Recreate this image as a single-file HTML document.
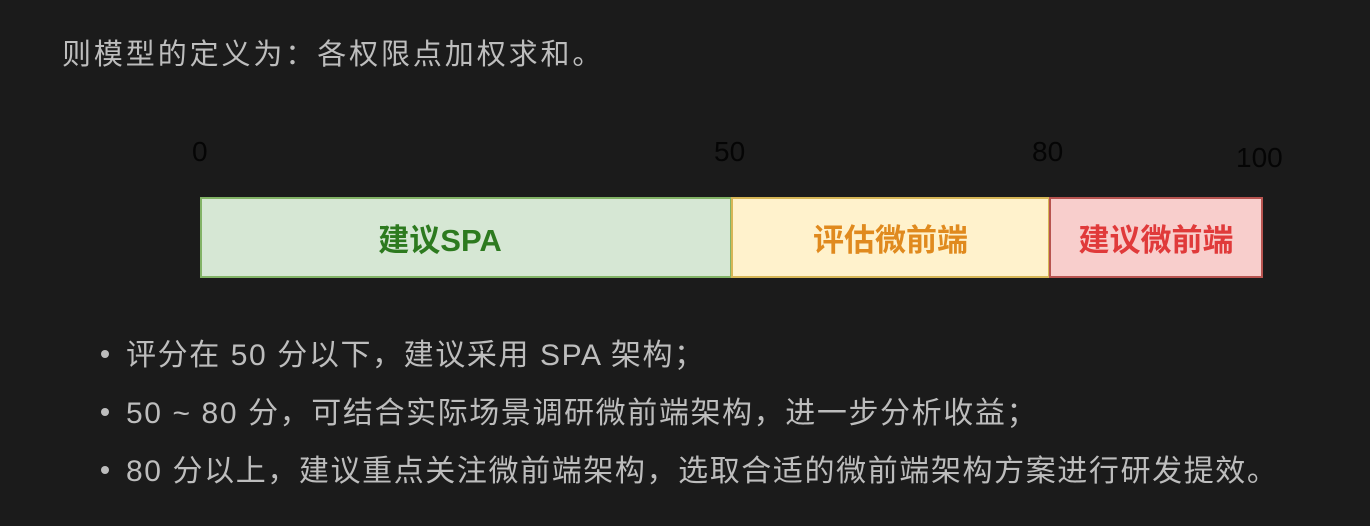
<!DOCTYPE html><html><head><meta charset="utf-8"><style>
body{margin:0;width:1370px;height:526px;background:#1b1b1b;overflow:hidden;position:relative;font-family:"Liberation Sans","Noto Sans CJK SC",sans-serif;color:#bdbdbd}
.t{position:absolute;white-space:nowrap}
.n{position:absolute;color:#050505;font-size:28px;font-family:"Liberation Sans",sans-serif}
.seg{position:absolute;top:197px;height:81px;box-sizing:border-box;display:flex;align-items:center;justify-content:center;font-weight:bold;font-size:31px}
.b{position:absolute;left:126px;font-size:30px;letter-spacing:1.6px;white-space:nowrap}
.d{position:absolute;left:101px;width:8px;height:8px;border-radius:50%;background:#bdbdbd}
</style></head><body>
<div class="t" style="left:62px;top:31px;font-size:29px;letter-spacing:2.9px">则模型的定义为：各权限点加权求和。</div>
<div class="n" style="left:192px;top:136px">0</div>
<div class="n" style="left:714px;top:136px">50</div>
<div class="n" style="left:1032px;top:136px">80</div>
<div class="n" style="left:1236px;top:142px">100</div>
<div class="seg" style="left:200px;width:532px;padding-right:52px;background:#d6e7d4;border:2px solid #82b366;color:#2d7a1f">建议SPA</div>
<div class="seg" style="left:731px;width:319px;background:#fff2cc;border:2px solid #d6b656;color:#e08a1e">评估微前端</div>
<div class="seg" style="left:1049px;width:214px;background:#f8cecc;border:2px solid #b85450;color:#e03a3a">建议微前端</div>
<div class="d" style="top:350px"></div><div class="b" style="top:330px">评分在 50 分以下，建议采用 SPA 架构；</div>
<div class="d" style="top:408px"></div><div class="b" style="top:388px">50 ~ 80 分，可结合实际场景调研微前端架构，进一步分析收益；</div>
<div class="d" style="top:466px"></div><div class="b" style="top:446px">80 分以上，建议重点关注微前端架构，选取合适的微前端架构方案进行研发提效。</div>
</body></html>
